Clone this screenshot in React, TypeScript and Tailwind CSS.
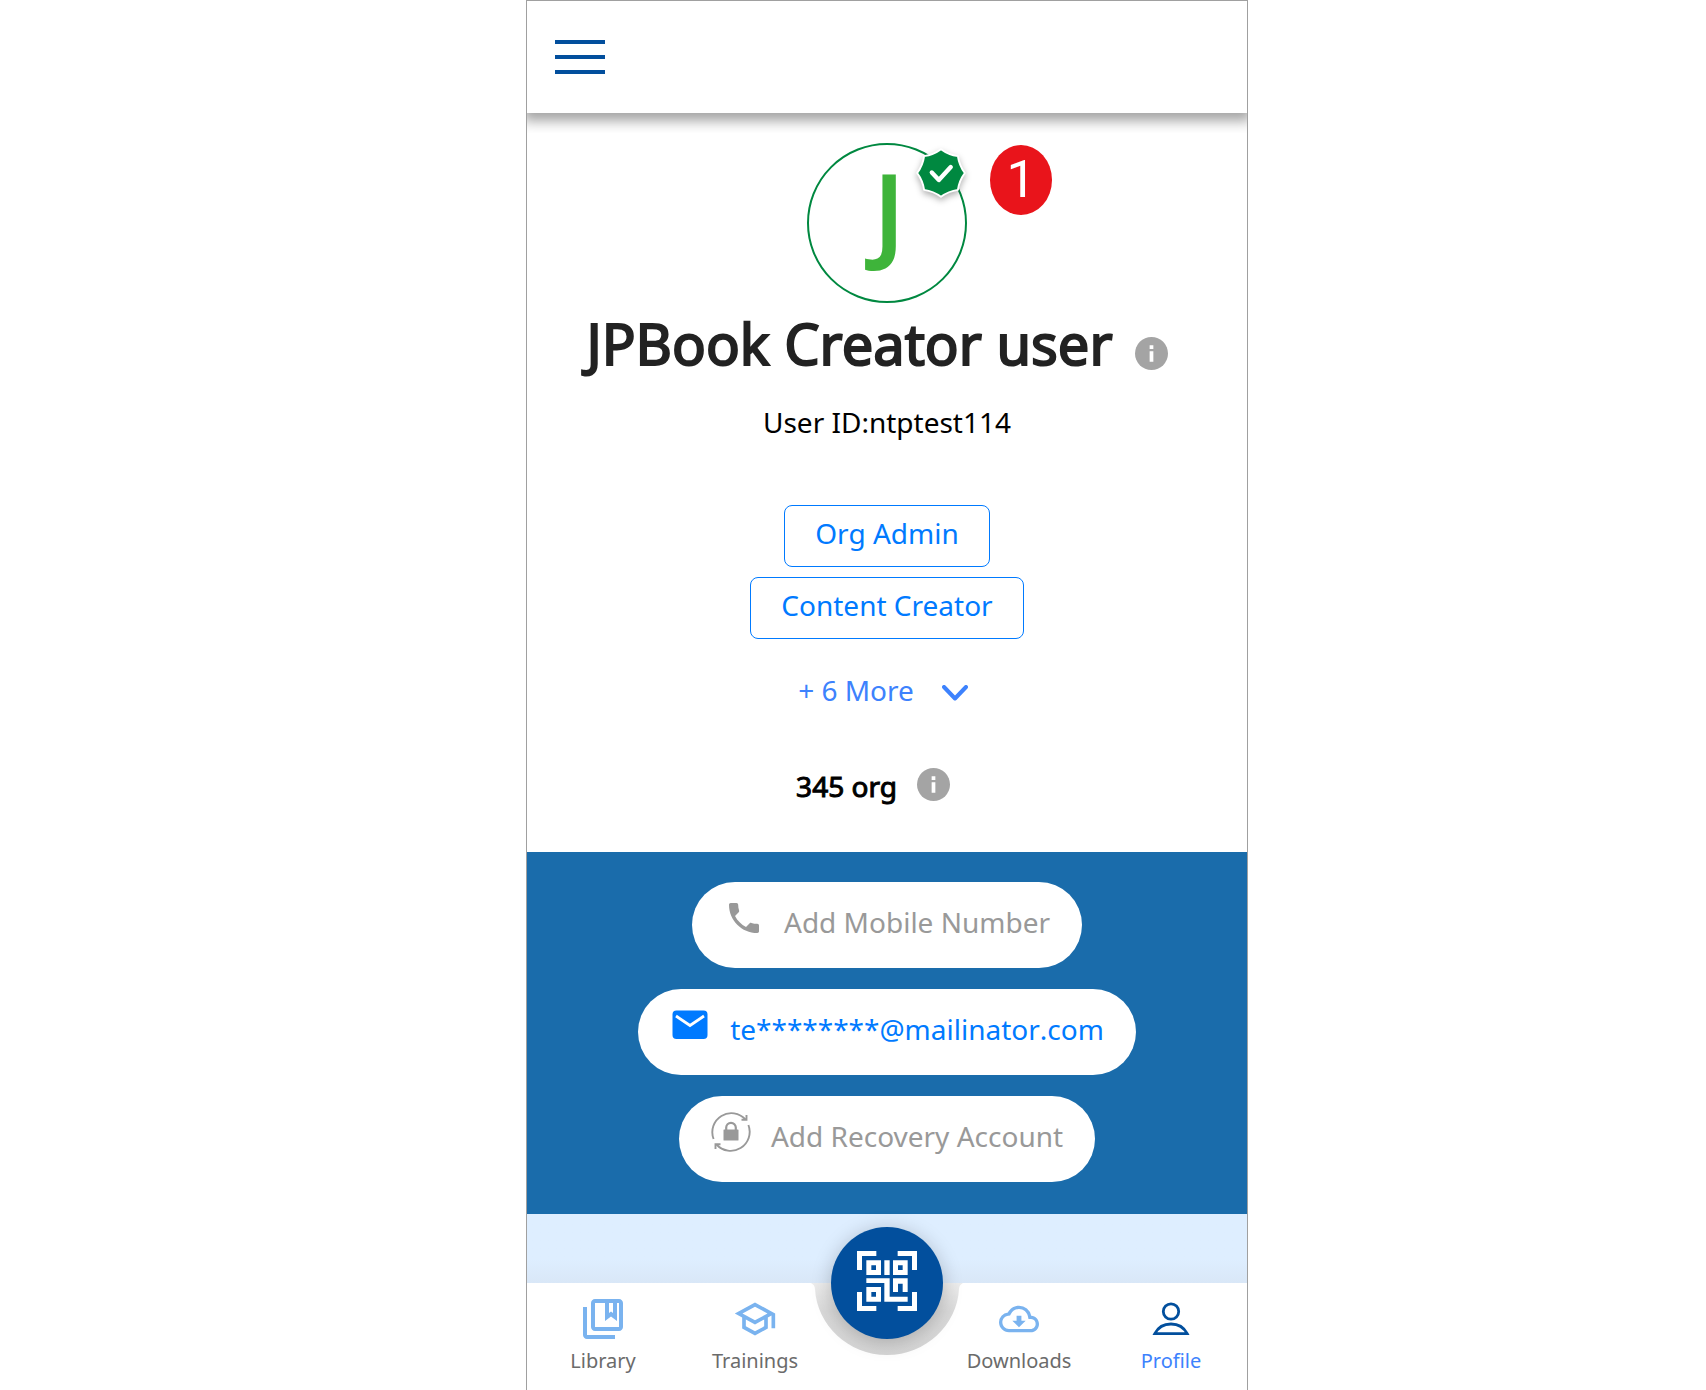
import React from "react";

function InfoIcon() {
  return (
    <svg viewBox="0 0 32 32" className="size-[33px] shrink-0" aria-hidden="true">
      <circle cx="16" cy="16" r="16" fill="#a4a4a4" />
      <path d="M14.2 8h3.6v3.600h-3.600zM14.2 13.8h3.600V24h-3.600z" fill="#fff" />
    </svg>
  );
}

function VerifiedBadge() {
  return (
    <svg viewBox="0 0 48 48" className="size-[52px] overflow-visible drop-shadow-[0_3px_3px_rgba(0,0,0,0.3)]" aria-hidden="true">
      <path
        d="M24 2Q31 7.200 39.600 8.400Q40.800 17 46 24Q40.800 31 39.600 39.600Q31 40.800 24 46Q17 40.800 8.400 39.600Q7.200 31 2 24Q7.200 17 8.400 8.400Q17 7.200 24 2Z"
        fill="#008840"
        stroke="#fff"
        strokeWidth="1.800"
        strokeLinejoin="round"
      />
      <path d="M15.500 23.500l6.500 7L33 18.500" fill="none" stroke="#fff" strokeWidth="4" strokeLinecap="round" strokeLinejoin="round" />
    </svg>
  );
}

function PhoneIcon() {
  return (
    <svg viewBox="0 0 24 24" className="size-10" fill="currentColor" aria-hidden="true">
      <path d="M20 15.5c-1.25 0-2.45-.2-3.57-.57-.35-.11-.74-.03-1.02.24l-2.2 2.2c-2.83-1.44-5.15-3.75-6.59-6.59l2.2-2.21c.28-.26.36-.65.25-1C8.7 6.45 8.5 5.25 8.5 4c0-.55-.45-1-1-1H4c-.55 0-1 .45-1 1 0 9.39 7.61 17 17 17 .55 0 1-.45 1-1v-3.5c0-.55-.45-1-1-1z" />
    </svg>
  );
}

function MailIcon() {
  return (
    <svg viewBox="0 0 40 40" className="size-10" aria-hidden="true">
      <rect x="2.500" y="5.500" width="35" height="28.500" rx="4" fill="currentColor" />
      <path d="M6 11l14 9.500L34 11" fill="none" stroke="#fff" strokeWidth="2.800" />
    </svg>
  );
}

function RecoveryIcon() {
  return (
    <svg viewBox="0 0 40 40" className="size-10" fill="none" stroke="currentColor" strokeWidth="1.900" aria-hidden="true">
      <path d="M2.600 27A19 19 0 0 1 34.500 7.500" />
      <path d="M37.400 13A19 19 0 0 1 5.500 32.500" />
      <path d="M30.500 7.800h5V3M9.500 32.200h-5V37" />
      <path d="M15.200 18v-2.400a4.800 4.800 0 0 1 9.600 0V18" strokeWidth="2.200" />
      <rect x="12.500" y="17.500" width="15" height="11" rx="0.600" fill="currentColor" stroke="none" />
    </svg>
  );
}

function LibraryIcon() {
  return (
    <svg viewBox="0 0 24 24" className="size-12" fill="currentColor" fillRule="evenodd" aria-hidden="true">
      <path d="M4 6H2v14c0 1.1.9 2 2 2h14v-2H4V6z" />
      <path d="M20 2H8c-1.1 0-2 .9-2 2v12c0 1.1.9 2 2 2h12c1.1 0 2-.9 2-2V4c0-1.1-.9-2-2-2zm0 14H8V4h5v9l3-2.25L19 13V4h1v12zM15 4h2v5l-1-.75L15 9V4z" />
    </svg>
  );
}

function TrainingsIcon() {
  return (
    <svg viewBox="0 0 24 24" className="size-11" fill="currentColor" aria-hidden="true">
      <path d="M12 3 1 9l4 2.18v6L12 21l7-3.82v-6l2-1.09V17h2V9L12 3zm6.82 6L12 12.72 5.18 9 12 5.28 18.82 9zM17 15.99l-5 2.73-5-2.73v-3.72L12 15l5-2.73v3.72z" />
    </svg>
  );
}

function DownloadsIcon() {
  return (
    <svg viewBox="0 0 24 24" className="size-10" fill="currentColor" aria-hidden="true">
      <path d="M19.35 10.04A7.49 7.49 0 0 0 12 4C9.11 4 6.6 5.64 5.35 8.04A5.994 5.994 0 0 0 0 14c0 3.31 2.69 6 6 6h13c2.76 0 5-2.24 5-5 0-2.64-2.05-4.78-4.65-4.96zM19 18H6c-2.21 0-4-1.79-4-4 0-2.05 1.53-3.76 3.56-3.97l1.07-.11.5-.95A5.469 5.469 0 0 1 12 6c2.62 0 4.88 1.86 5.39 4.43l.3 1.5 1.53.11A2.98 2.98 0 0 1 22 15c0 1.65-1.35 3-3 3zM10.55 10h2.9v3H16l-4 4-4-4h2.55z" />
    </svg>
  );
}

function ProfileIcon() {
  return (
    <svg viewBox="0 0 40 40" className="size-10" fill="none" stroke="#024f9d" strokeWidth="2.800" aria-hidden="true">
      <circle cx="20" cy="12.500" r="7.700" />
      <path d="M3.800 34.700C7 28.500 13 25 20 25s13 3.500 16.200 9.700z" />
    </svg>
  );
}

function ScanIcon() {
  return (
    <svg viewBox="0 0 180 180" className="size-[60px]" fill="#fff" fillRule="evenodd" aria-hidden="true">
      <path d="M0 0h58v15H15v42H0zM122 0h58v57h-15V15h-43zM0 123h15v42h43v15H0zM165 123h15v57h-58v-15h43z" />
      <path d="M28 28h44v44H28zM43 43v14h14V43zM108 28h44v44h-44zM123 43v14h14V43zM28 108h44v44H28zM43 123v14h14v-14zM82 28h16v44H82z" />
      <path d="M28 82h70v55h54v15H82V96H28zM108 82h44v41h-15V98h-14v25h-15z" />
    </svg>
  );
}

const roles = ["Org Admin", "Content Creator"];

const contacts = [
  { label: "Add Mobile Number", icon: <PhoneIcon />, tone: "text-[#999999]" },
  { label: "te********@mailinator.com", icon: <MailIcon />, tone: "text-[#007aff] [font-kerning:none]" },
  { label: "Add Recovery Account", icon: <RecoveryIcon />, tone: "text-[#999999]" },
];

function NavItem({ label, icon, active }: { label: string; icon: React.ReactNode; active?: boolean }) {
  return (
    <a href="#" aria-current={active ? "page" : undefined} className="flex flex-1 flex-col items-center pt-3">
      <span className="flex h-12 items-center text-[#7ab3ef]">{icon}</span>
      <span className={active ? "text-xl leading-9 text-[#3d82fd]" : "text-xl leading-9 text-[#6b6b6b]"}>{label}</span>
    </a>
  );
}

export default function App() {
  return (
    <div className="flex min-h-screen justify-center bg-white font-['Noto_Sans',sans-serif] text-[28px] leading-10 text-black lg:pl-[68px]">
      <div className="flex w-full max-w-[722px] flex-col border-x border-t border-[#a0a0a0]">
        <header className="flex h-28 items-center bg-white px-7 shadow-[0_4px_12px_4px_rgba(0,0,0,0.36)] [clip-path:inset(0_0_-20px_0)]">
          <button type="button" aria-label="Open menu" className="flex w-[50px] flex-col gap-[11px]">
            <span className="h-1 bg-[#024f9d]" />
            <span className="h-1 bg-[#024f9d]" />
            <span className="h-1 bg-[#024f9d]" />
          </button>
        </header>

        <main className="flex grow flex-col">
          <section className="flex flex-col items-center pt-[30px]">
            <div className="relative flex size-40 items-center justify-center rounded-full border-2 border-[#008840] pb-[26px] pl-1">
              <span className="text-[104px] leading-none font-semibold text-[#3eb43a]">J</span>
              <span className="absolute top-0.5 -right-0.5">
                <VerifiedBadge />
              </span>
              <span className="absolute top-0 left-[181px] flex h-[70px] w-[62px] items-center justify-center rounded-[50%] bg-[#e9141b] font-[Roboto,sans-serif] text-[52px] leading-none text-white">
                1
              </span>
            </div>

            <div className="mt-1 mr-5 flex items-center gap-[22px]">
              <h1 className="text-[56px] leading-[72px] text-[#222222] [-webkit-text-stroke:2px_#222222]">JPBook Creator user</h1>
              <button type="button" aria-label="About this name" className="mt-5">
                <InfoIcon />
              </button>
            </div>
            <p className="mt-[23px]">User ID:ntptest114</p>

            <ul className="mt-[63px] flex flex-col items-center gap-[10px]">
              {roles.map((role) => (
                <li key={role} className="rounded-lg border border-[#007aff] px-[30px] pt-[7px] pb-[13px] text-[#007aff]">
                  {role}
                </li>
              ))}
            </ul>

            <button type="button" className="mt-[31px] mr-2 flex items-center gap-7 text-[#3d82fd]">
              + 6 More
              <svg viewBox="0 0 26 16" className="mt-1.5 h-4 w-[26px]" fill="none" stroke="currentColor" strokeWidth="4" strokeLinecap="round" strokeLinejoin="round" aria-hidden="true">
                <path d="M2 2l11 11.500L24 2" />
              </svg>
            </button>

            <div className="mt-14 mr-7 mb-[46px] flex items-center gap-5">
              <span className="[-webkit-text-stroke:1px_#000]">345 org</span>
              <button type="button" aria-label="About organisations" className="pb-1">
                <InfoIcon />
              </button>
            </div>
          </section>

          <section className="flex flex-col items-center gap-[21px] bg-[#1a6cab] pt-[30px] pb-8">
            {contacts.map((contact) => (
              <button key={contact.label} type="button" className="flex h-[86px] items-center rounded-full bg-white px-8 pb-[6px]">
                <span className={contact.tone + " flex items-center gap-5"}>
                  <span className="pb-2">{contact.icon}</span>
                  {contact.label}
                </span>
              </button>
            ))}
          </section>

          <div className="min-h-[69px] grow bg-linear-to-b from-[#deeeff] from-65% to-[#d9e7f7]" />
        </main>

        <nav className="relative flex h-[107px] justify-center bg-white">
          <NavItem label="Library" icon={<LibraryIcon />} />
          <NavItem label="Trainings" icon={<TrainingsIcon />} />
          <div className="relative flex w-28 justify-center">
            <svg viewBox="0 0 160 74" className="absolute top-0 h-[74px] w-40" aria-hidden="true">
              <defs>
                <linearGradient id="notch" x1="0" y1="0" x2="0" y2="1">
                  <stop offset="0" stopColor="#ededed" />
                  <stop offset="0.400" stopColor="#d9d9d9" />
                  <stop offset="1" stopColor="#d6d6d6" />
                </linearGradient>
              </defs>
              <path d="M4 0Q8 2 8 6C10 42 41 72 80 72S150 42 152 6Q152 2 156 0z" fill="url(#notch)" />
            </svg>
            <button type="button" aria-label="Scan QR code" className="absolute -top-14 flex size-28 items-center justify-center rounded-full bg-[#024f9d] pb-1 shadow-[0_3px_20px_rgba(0,0,0,0.22)]">
              <ScanIcon />
            </button>
          </div>
          <NavItem label="Downloads" icon={<DownloadsIcon />} />
          <NavItem label="Profile" icon={<ProfileIcon />} active />
        </nav>
      </div>
    </div>
  );
}
